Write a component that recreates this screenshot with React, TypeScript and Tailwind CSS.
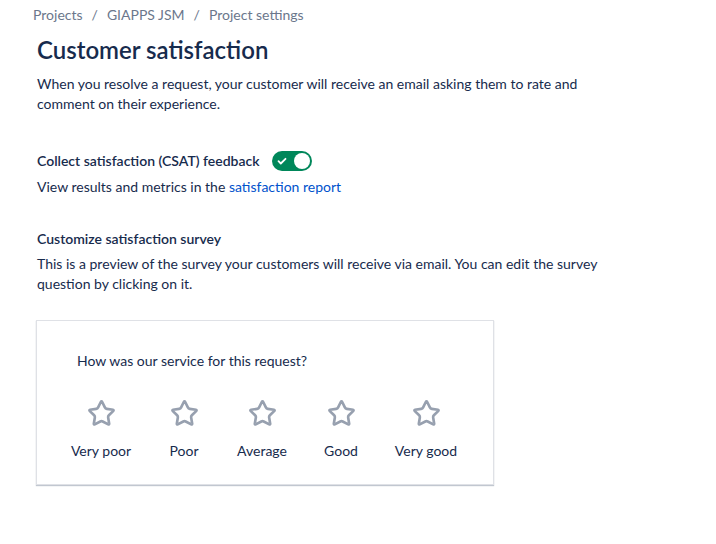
import React from "react";
import { Star } from "lucide-react";

export default function App() {
  const ratings = [
    { r: "Very poor", c: "w-[60px]" },
    { r: "Poor", c: "w-[40px] ml-[33px]" },
    { r: "Average", c: "w-[60px] ml-[28px]" },
    { r: "Good", c: "w-[40px] ml-[29px]" },
    { r: "Very good", c: "w-[70px] ml-[30px]" },
  ];
  return (
    <div className="min-h-[544px] w-[716px] bg-white text-[#172b4d] text-[14px] leading-[20px]" style={{ fontFamily: '"Lato", "Segoe UI", sans-serif' }}>
      <div className="pl-[33px] pt-[5px] text-[#6b778c] flex gap-[9px]">
        <span>Projects</span><span>/</span><span>GIAPPS JSM</span><span>/</span><span>Project settings</span>
      </div>
      <div className="pl-[37px] pr-[40px]">
        <h1 className="mt-[9px] text-[24px] leading-[32px] font-semibold">Customer satisfaction</h1>
        <p className="mt-[8px] w-[580px]">When you resolve a request, your customer will receive an email asking them to rate and comment on their experience.</p>
        <div className="mt-[37px] flex items-center gap-[12px]">
          <span className="font-semibold">Collect satisfaction (CSAT) feedback</span>
          <div className="w-[40px] h-[20px] rounded-full bg-[#00875a] flex items-center justify-between px-[4px]">
            <svg width="12" height="12" viewBox="0 0 12 12"><path d="M2.5 6.2l2.3 2.3 4.7-4.7" stroke="white" strokeWidth="1.8" fill="none" strokeLinecap="round" strokeLinejoin="round" /></svg>
            <div className="w-[16px] h-[16px] rounded-full bg-white -mr-[2px]" />
          </div>
        </div>
        <p className="mt-[6px]">View results and metrics in the <span className="text-[#0052cc]">satisfaction report</span></p>
        <h2 className="mt-[32px] font-semibold">Customize satisfaction survey</h2>
        <p className="mt-[5px] w-[570px]">This is a preview of the survey your customers will receive via email. You can edit the survey question by clicking on it.</p>
        <div className="mt-[26px] -ml-[1px] w-[458px] h-[165px] border border-[#dfe1e6] shadow-[0_1px_1px_rgba(9,30,66,0.25)] pt-[30px]">
          <p className="ml-[40px]">How was our service for this request?</p>
          <div className="mt-[28px] ml-[34px] flex">
            {ratings.map(({ r, c }) => (
              <div key={r} className={"flex flex-col items-center whitespace-nowrap " + c}>
                <Star size={29} strokeWidth={2.2} className="text-[#97a0af]" />
                <span className="mt-[13px]">{r}</span>
              </div>
            ))}
          </div>
        </div>
      </div>
    </div>
  );
}
